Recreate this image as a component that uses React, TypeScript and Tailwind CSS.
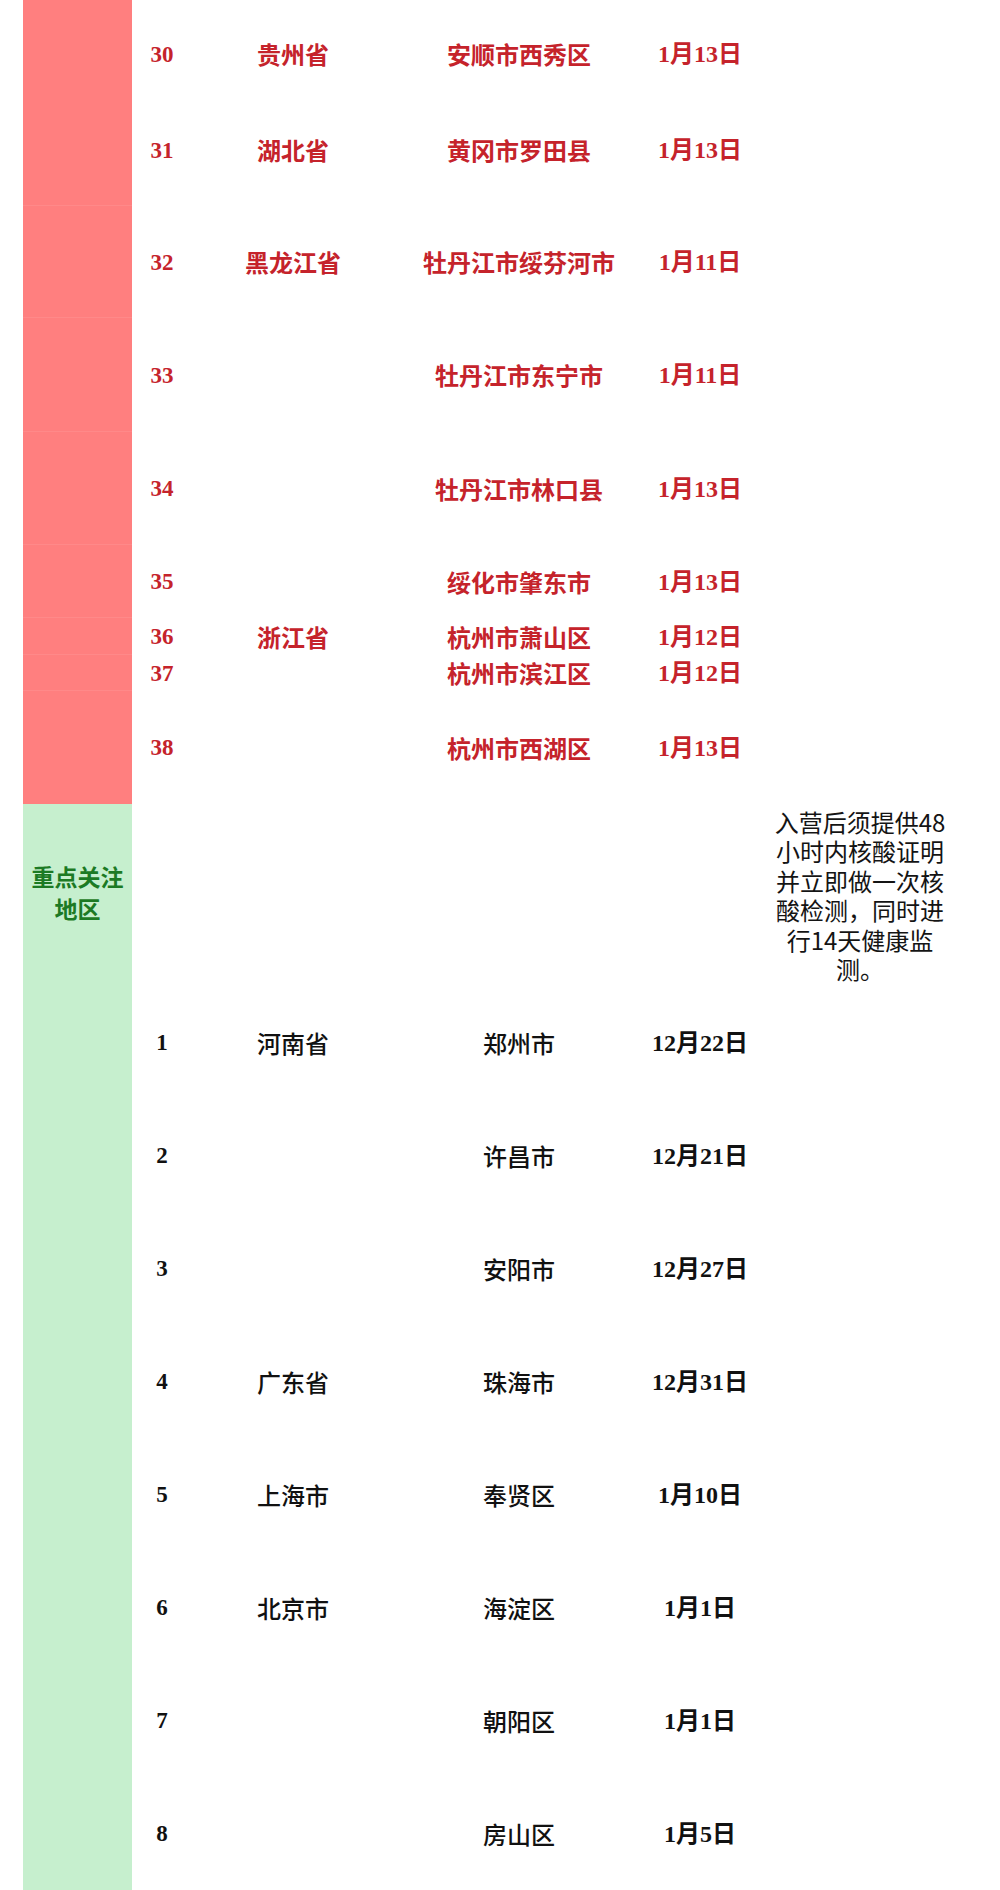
import React from "react"

type Row = {
  n: number
  province: string
  district: string
  date: string
  h: string
  extra?: string
}

// red section: rows 30-38
const redRows: Row[] = [
  { n: 30, province: "贵州省", district: "安顺市西秀区", date: "1月13日", h: "h-[94px]", extra: "pt-[14px]" },
  { n: 31, province: "湖北省", district: "黄冈市罗田县", date: "1月13日", h: "h-[112px]" },
  { n: 32, province: "黑龙江省", district: "牡丹江市绥芬河市", date: "1月11日", h: "h-[112px]" },
  { n: 33, province: "", district: "牡丹江市东宁市", date: "1月11日", h: "h-[114px]" },
  { n: 34, province: "", district: "牡丹江市林口县", date: "1月13日", h: "h-[113px]" },
  { n: 35, province: "", district: "绥化市肇东市", date: "1月13日", h: "h-[73px]" },
  { n: 36, province: "浙江省", district: "杭州市萧山区", date: "1月12日", h: "h-[37px]" },
  { n: 37, province: "", district: "杭州市滨江区", date: "1月12日", h: "h-[36px]" },
  { n: 38, province: "", district: "杭州市西湖区", date: "1月13日", h: "h-[113px]" },
]

const greenRows: Row[] = [
  { n: 1, province: "河南省", district: "郑州市", date: "12月22日", h: "h-[113px]" },
  { n: 2, province: "", district: "许昌市", date: "12月21日", h: "h-[113px]" },
  { n: 3, province: "", district: "安阳市", date: "12月27日", h: "h-[113px]" },
  { n: 4, province: "广东省", district: "珠海市", date: "12月31日", h: "h-[113px]" },
  { n: 5, province: "上海市", district: "奉贤区", date: "1月10日", h: "h-[113px]" },
  { n: 6, province: "北京市", district: "海淀区", date: "1月1日", h: "h-[113px]" },
  { n: 7, province: "", district: "朝阳区", date: "1月1日", h: "h-[113px]" },
  { n: 8, province: "", district: "房山区", date: "1月5日", h: "h-[113px]" },
]

const serif = "font-['Liberation_Serif','Noto_Sans_CJK_SC',serif]"
const sans = "font-['Noto_Sans_CJK_SC','Noto_Sans',sans-serif]"
const cols = "grid grid-cols-[109px_60px_202px_250px_112px_208px]"

function TableRow({ row, red, divider }: { row: Row; red: boolean; divider: boolean }) {
  const color = red ? "text-[#c5232b]" : "text-[#111111]"
  const cjkWeight = red ? "font-bold" : "font-medium"
  return (
    <div className={`${cols} ${row.h} leading-none`}>
      <div
        className={
          red
            ? divider
              ? "bg-[#ff7f7f] shadow-[inset_0_-1px_0_#ff8989]"
              : "bg-[#ff7f7f]"
            : "bg-[#c6efce]"
        }
      />
      <div className={`flex items-center justify-center ${row.extra ?? ""} ${serif} font-bold text-[23px] ${color}`}>
        {row.n}
      </div>
      <div className={`flex items-center justify-center ${row.extra ?? ""} ${sans} ${cjkWeight} text-[24px] ${color}`}>
        {row.province}
      </div>
      <div className={`flex items-center justify-center ${row.extra ?? ""} ${sans} ${cjkWeight} text-[24px] ${color}`}>
        {row.district}
      </div>
      <div
        className={`flex items-center justify-center whitespace-nowrap ${row.extra ?? ""} ${serif} font-bold text-[24px] ${color}`}
      >
        {row.date}
      </div>
      <div />
    </div>
  )
}

export default function App() {
  return (
    <div className="w-[1000px] h-[1890px] overflow-hidden bg-white pl-[23px]">
      {redRows.map((row, i) => (
        <TableRow key={row.n} row={row} red divider={i > 0 && i < redRows.length - 1} />
      ))}

      {/* 重点关注地区 header row with the note */}
      <div className={`${cols} h-[182px]`}>
        <div className="flex items-center justify-center bg-[#c6efce] pb-[6px]">
          <p className={`${sans} font-bold text-[23px] leading-[32px] text-[#1c7a24] text-center`}>
            重点关注
            <br />
            地区
          </p>
        </div>
        <div />
        <div />
        <div />
        <div />
        <div className="flex items-center justify-center">
          <p className={`${sans} w-[176px] text-[24px] leading-[29.5px] text-[#141414] text-center`}>
            入营后须提供48小时内核酸证明并立即做一次核酸检测，同时进行14天健康监测。
          </p>
        </div>
      </div>

      {greenRows.map((row) => (
        <TableRow key={row.n} row={row} red={false} divider={false} />
      ))}
    </div>
  )
}
